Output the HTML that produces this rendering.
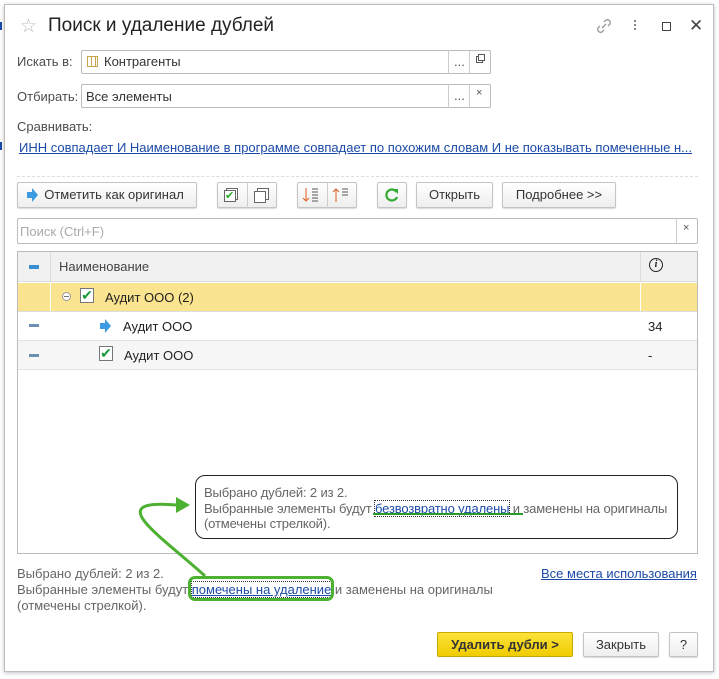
<!DOCTYPE html>
<html><head><meta charset="utf-8"><style>
*{box-sizing:border-box;margin:0;padding:0}
body{width:719px;height:679px;background:#fff;font-family:"Liberation Sans",sans-serif;font-size:13px;color:#4d4d4d;position:relative;overflow:hidden}
.a{position:absolute}
.win{left:4px;top:4px;width:710px;height:668px;border:1px solid #bdbdbd;background:#fff;box-shadow:0 1px 4px rgba(0,0,0,.25)}
.inp{border:1px solid #bcbcbc;border-radius:2px;background:#fff}
.btn{border:1px solid #c4c4c4;border-radius:2px;background:linear-gradient(#fff,#eee);box-shadow:0 1px 1px rgba(0,0,0,.15);color:#333;text-align:center;line-height:24px}
.lnk{color:#1c4aa8;text-decoration:underline}
.lab{color:#4d4d4d}
</style></head><body>
<div class="a" style="left:0;top:22px;width:2px;height:8px;background:#1c4aa8"></div>
<div class="a" style="left:0;top:142px;width:2px;height:8px;background:#1c4aa8"></div>
<div class="a win"></div>
<div class="a" style="left:20px;top:15px;font-size:19px;color:#bbb">☆</div>
<div class="a" style="left:48px;top:15px;font-size:19px;color:#222">Поиск и удаление дублей</div>
<svg class="a" style="left:594px;top:16px" width="20" height="20"><path d="M8 12 L12 8 M6 10 l-2 2 a3 3 0 0 0 4 4 l2-2 M14 10 l2-2 a3 3 0 0 0 -4-4 l-2 2" stroke="#999" fill="none" stroke-width="1.3"/></svg>
<div class="a" style="left:634px;top:20px;width:2px;height:2px;background:#888;box-shadow:0 4px #888,0 8px #888"></div>
<div class="a" style="left:662px;top:22px;width:9px;height:9px;border:1.5px solid #444"></div>
<div class="a" style="left:689px;top:16px;font-size:17px;color:#444">✕</div>

<div class="a lab" style="left:17px;top:54px">Искать в:</div>
<div class="a inp" style="left:81px;top:50px;width:410px;height:24px"></div>
<div class="a" style="left:87px;top:56px;width:11px;height:11px;border:1px solid #c9a54a;background:repeating-linear-gradient(90deg,#fff 0 3px,#c9a54a 3px 4px)"></div>
<div class="a" style="left:104px;top:54px;color:#333">Контрагенты</div>
<div class="a" style="left:448px;top:50px;width:1px;height:24px;background:#ccc"></div>
<div class="a" style="left:469px;top:50px;width:1px;height:24px;background:#ccc"></div>
<div class="a" style="left:454px;top:54px;color:#555">...</div>
<div class="a" style="left:476px;top:56px;width:7px;height:7px;border:1px solid #555"></div>
<div class="a" style="left:478px;top:54px;width:7px;height:7px;border:1px solid #555;background:#fff"></div>

<div class="a lab" style="left:17px;top:89px">Отбирать:</div>
<div class="a inp" style="left:81px;top:84px;width:410px;height:24px"></div>
<div class="a" style="left:86px;top:89px;color:#333">Все элементы</div>
<div class="a" style="left:448px;top:84px;width:1px;height:24px;background:#ccc"></div>
<div class="a" style="left:469px;top:84px;width:1px;height:24px;background:#ccc"></div>
<div class="a" style="left:454px;top:88px;color:#555">...</div>
<div class="a" style="left:476px;top:87px;font-size:11px;color:#555">×</div>

<div class="a lab" style="left:17px;top:119px">Сравнивать:</div>
<div class="a lnk" style="left:19px;top:140px">ИНН совпадает И Наименование в программе совпадает по похожим словам И не показывать помеченные н...</div>
<div class="a" style="left:17px;top:176px;width:681px;border-top:1px dashed #ddd"></div>

<div class="a btn" style="left:17px;top:182px;width:180px;height:26px;padding-left:14px">Отметить как оригинал</div>
<svg class="a" style="left:25px;top:187px" width="14" height="16"><path d="M2 5h5V1l6 7-6 7v-4H2z" fill="#3a9be0"/></svg>
<div class="a btn" style="left:217px;top:182px;width:60px;height:26px"></div>
<div class="a" style="left:247px;top:182px;width:1px;height:26px;background:#ccc"></div>
<div class="a" style="left:226px;top:188px;width:12px;height:12px;border:1px solid #666;background:#fff"></div>
<div class="a" style="left:224px;top:190px;width:12px;height:12px;border:1px solid #666;background:#fff;color:#2a2;font-size:11px;line-height:11px">✔</div>
<div class="a" style="left:257px;top:188px;width:12px;height:12px;border:1px solid #666;background:#fff"></div>
<div class="a" style="left:254px;top:191px;width:12px;height:12px;border:1px solid #666;background:#fff"></div>
<div class="a btn" style="left:297px;top:182px;width:60px;height:26px"></div>
<div class="a" style="left:327px;top:182px;width:1px;height:26px;background:#ccc"></div>
<svg class="a" style="left:302px;top:186px" width="20" height="18"><path d="M4 2v13M1 12l3 3 3-3" stroke="#e06020" fill="none"/><path d="M10 3h6M10 6h6M10 9h6M10 12h6M10 15h6" stroke="#555"/></svg>
<svg class="a" style="left:332px;top:186px" width="20" height="18"><path d="M4 16V3M1 6l3-3 3 3" stroke="#e06020" fill="none"/><path d="M10 3h6M10 6h6M10 9h6" stroke="#555"/></svg>
<div class="a btn" style="left:377px;top:182px;width:30px;height:26px"></div>
<svg class="a" style="left:384px;top:187px" width="16" height="16"><path d="M12.5 5A5.5 5.5 0 1 0 13 10" stroke="#3a3" stroke-width="2.2" fill="none"/><path d="M9 2l5 0 0 5z" fill="#3a3"/></svg>
<div class="a btn" style="left:416px;top:182px;width:77px;height:26px">Открыть</div>
<div class="a btn" style="left:502px;top:182px;width:114px;height:26px">Подробнее &gt;&gt;</div>

<div class="a inp" style="left:17px;top:218px;width:681px;height:26px"></div>
<div class="a" style="left:20px;top:224px;color:#aaa">Поиск (Ctrl+F)</div>
<div class="a" style="left:676px;top:218px;width:1px;height:26px;background:#ccc"></div>
<div class="a" style="left:683px;top:222px;font-size:11px;color:#555">×</div>

<div class="a" style="left:17px;top:251px;width:681px;height:303px;border:1px solid #bbb"></div>
<div class="a" style="left:18px;top:252px;width:679px;height:30px;background:#f1f1f1;border-bottom:1px solid #ddd"></div>
<div class="a" style="left:50px;top:252px;width:1px;height:30px;background:#ddd"></div>
<div class="a" style="left:640px;top:252px;width:1px;height:30px;background:#ddd"></div>
<div class="a" style="left:29px;top:265px;width:10px;height:4px;background:#3a8fd0"></div>
<div class="a" style="left:59px;top:259px;color:#444">Наименование</div>
<div class="a" style="left:649px;top:258px;width:14px;height:14px;border:1.5px solid #222;border-radius:50%;font:bold italic 10px 'Liberation Serif',serif;text-align:center;line-height:12px;color:#222">i</div>
<div class="a" style="left:18px;top:283px;width:679px;height:28px;background:#fbe48f"></div>
<div class="a" style="left:50px;top:283px;width:1px;height:28px;background:#fff"></div>
<div class="a" style="left:640px;top:283px;width:1px;height:28px;background:#fff"></div>
<div class="a" style="left:62px;top:292px;width:9px;height:9px;border:1px solid #999;border-radius:50%;background:#fff"></div>
<div class="a" style="left:64px;top:296px;width:5px;height:1px;background:#777"></div>
<div class="a" style="left:80px;top:288px;width:14px;height:15px;border:1px solid #777;background:#fff;color:#1a9a3a;font-size:14px;line-height:12px;text-align:center">✔</div>
<div class="a" style="left:105px;top:290px;color:#222">Аудит ООО (2)</div>
<div class="a" style="left:18px;top:311px;width:679px;height:1px;background:#ddd"></div>
<div class="a" style="left:29px;top:324px;width:10px;height:3px;background:#6a8fb0"></div>
<svg class="a" style="left:98px;top:318px" width="14" height="16"><path d="M2 5h5V1l6 7-6 7v-4H2z" fill="#3a9be0"/></svg>
<div class="a" style="left:123px;top:319px;color:#222">Аудит ООО</div>
<div class="a" style="left:648px;top:319px;color:#222">34</div>
<div class="a" style="left:18px;top:340px;width:679px;height:30px;background:#f6f6f6;border-top:1px solid #e2e2e2;border-bottom:1px solid #e2e2e2"></div>
<div class="a" style="left:29px;top:354px;width:10px;height:3px;background:#6a8fb0"></div>
<div class="a" style="left:99px;top:346px;width:14px;height:15px;border:1px solid #777;background:#fff;color:#1a9a3a;font-size:14px;line-height:12px;text-align:center">✔</div>
<div class="a" style="left:124px;top:348px;color:#222">Аудит ООО</div>
<div class="a" style="left:648px;top:348px;color:#222">-</div>

<div class="a" style="left:195px;top:475px;width:483px;height:64px;border:1.5px solid #222;border-radius:10px;background:#fff"></div>
<div class="a" style="left:204px;top:485px;line-height:15.5px;color:#666;letter-spacing:-0.15px;white-space:nowrap">Выбрано дублей: 2 из 2.<br>Выбранные элементы будут <span style="color:#1c4aa8;text-decoration:underline;outline:1px dotted #333">безвозвратно удалены</span> и заменены на оригиналы<br>(отмечены стрелкой).</div>
<div class="a" style="left:373px;top:513px;width:150px;height:2px;background:#2a9a2a"></div>

<div class="a" style="left:17px;top:566px;line-height:16px;color:#666">Выбрано дублей: 2 из 2.<br>Выбранные элементы будут <span style="color:#1c4aa8;text-decoration:underline;outline:1px dotted #333">помечены на удаление</span> и заменены на оригиналы<br>(отмечены стрелкой).</div>
<div class="a" style="left:188px;top:576px;width:146px;height:25px;border:3px solid #4cb030;border-radius:7px"></div>
<svg class="a" style="left:0;top:0" width="719" height="679"><path d="M205 576 C165 540 120 510 150 505 C160 503 170 505 178 505" stroke="#4cb030" stroke-width="3" fill="none"/><path d="M176 497 L190 505 L176 513z" fill="#4cb030"/></svg>
<div class="a lnk" style="left:541px;top:566px">Все места использования</div>

<div class="a" style="left:437px;top:632px;width:136px;height:25px;border:1px solid #c9a800;border-radius:2px;background:linear-gradient(#fbe33a,#f1cc00);font-weight:bold;color:#333;text-align:center;line-height:23px;font-size:13px">Удалить дубли &gt;</div>
<div class="a btn" style="left:583px;top:632px;width:76px;height:25px;line-height:23px">Закрыть</div>
<div class="a btn" style="left:669px;top:632px;width:29px;height:25px;line-height:23px">?</div>
</body></html>
